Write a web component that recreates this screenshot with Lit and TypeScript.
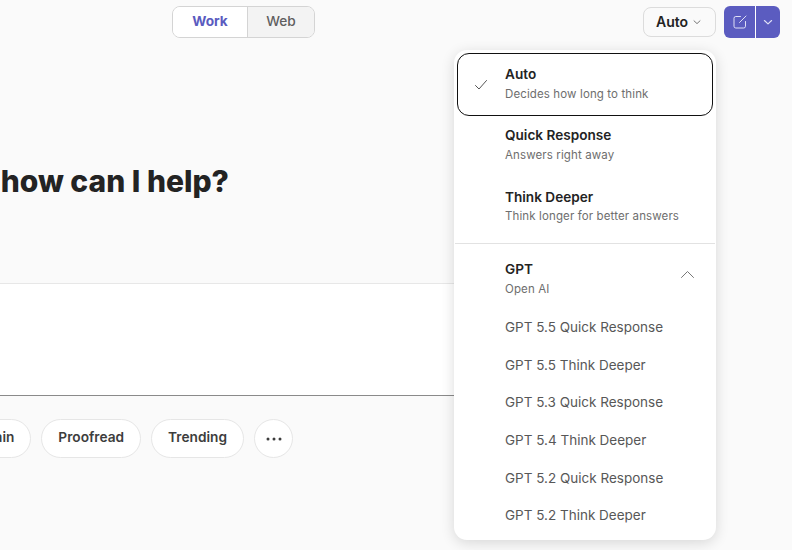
import { LitElement, html, css } from "lit";
import { customElement } from "lit/decorators.js";

const chevronDown = (size: number) => html`<svg width=${size} height=${size} viewBox="0 0 10 10" fill="none" stroke="currentColor" stroke-width="1" stroke-linecap="round" stroke-linejoin="round"><path d="M2 3.8 5 6.6 8 3.8"/></svg>`;

@customElement("app-root")
export class AppRoot extends LitElement {
  static styles = css`
    :host {
      display: block;
      position: relative;
      width: 792px;
      height: 550px;
      overflow: hidden;
      background: #fafafa;
      font-family: Inter, "Liberation Sans", sans-serif;
      color: #232323;
      -webkit-font-smoothing: antialiased;
    }
    .top {
      display: flex;
      align-items: center;
      height: 32px;
      padding: 6px 12px 0 172px;
    }
    .tabs {
      display: flex;
      width: 143px;
      height: 32px;
      box-sizing: border-box;
      border: 1px solid #d4d4d4;
      border-radius: 8px;
      overflow: hidden;
      font-size: 13.7px;
      line-height: 28px;
      text-align: center;
    }
    .tab-on {
      width: 74px;
      background: #fff;
      color: #5a5bbf;
      font-weight: 700;
      border-right: 1px solid #d4d4d4;
    }
    .tab-off { flex: 1; background: #f3f3f3; color: #5f5f5f; font-weight: 500; }
    .auto {
      margin-left: auto;
      display: flex;
      align-items: center;
      justify-content: center;
      gap: 4px;
      width: 73px;
      height: 30px;
      box-sizing: border-box;
      padding: 0 1px 2px 0;
      border: 1px solid #dcdcdc;
      border-radius: 8px;
      font-size: 14px;
      font-weight: 600;
      color: #232323;
    }
    .auto svg { color: #777; margin-top: 2px; }
    .split {
      margin-left: 8px;
      display: flex;
      width: 56px;
      height: 32px;
      border-radius: 6px;
      overflow: hidden;
      background: #5b5cc0;
      color: #dfdff5;
    }
    .split > div { display: flex; align-items: center; justify-content: center; }
    .compose { width: 31px; border-right: 1px solid #fff; }
    .caret { flex: 1; }
    .title {
      display: flex;
      justify-content: flex-end;
      width: 229px;
      margin-top: 123px;
      font-size: 30px;
      line-height: 40px;
      font-weight: 800;
      letter-spacing: 0;
      white-space: nowrap;
      color: #232323;
    }
    .composer {
      width: 470px;
      height: 113px;
      box-sizing: border-box;
      margin-top: 82px;
      background: #fff;
      border-top: 1px solid #e7e7e7;
      border-bottom: 1px solid #8a8a8a;
    }
    .chips {
      display: flex;
      justify-content: flex-end;
      gap: 10px;
      width: 293px;
      margin-top: 23px;
    }
    .chip {
      flex: none;
      height: 39px;
      box-sizing: border-box;
      padding: 0 16px;
      border: 1px solid #e6e6e6;
      border-radius: 20px;
      background: #fff;
      font-size: 13.7px;
      font-weight: 600;
      line-height: 34px;
      color: #3d3d3d;
    }
    .more {
      width: 39px;
      padding: 0;
      display: flex;
      align-items: center;
      justify-content: center;
    }
    .menu {
      position: absolute;
      left: 454px;
      top: 50px;
      width: 262px;
      height: 490px;
      box-sizing: border-box;
      padding: 3px;
      background: #fff;
      border-radius: 13px;
      box-shadow: 0 3px 14px rgba(0, 0, 0, 0.14);
    }
    .opt {
      position: relative;
      height: 61.5px;
      box-sizing: border-box;
      padding: 10px 0 0 48px;
    }
    .opt.sel {
      height: 63px;
      padding: 11px 0 0 47px;
      border: 1.2px solid #111;
      border-radius: 12px;
    }
    .check { position: absolute; left: 16px; top: 25px; color: #555; display: block; }
    .name { font-size: 13.6px; line-height: 18px; font-weight: 600; color: #232323; }
    .sub { margin-top: 2.6px; font-size: 11.5px; line-height: 16px; color: #6e6e6e; letter-spacing: 0.12px; }
    .rule { height: 1px; margin: 4px -2px 0; background: #e2e2e2; }
    .group {
      display: flex;
      justify-content: space-between;
      align-items: center;
      height: 62px;
      box-sizing: border-box;
      padding: 7px 18px 0 48px;
    }
    .group svg { color: #777; margin-bottom: 9px; }
    .models { display: flex; flex-direction: column; padding-top: 3px; }
    .model {
      height: 37.7px;
      padding-left: 48px;
      font-size: 13.5px;
      line-height: 37.7px;
      color: #575757;
    }
  `;

  render() {
    const models = [
      "GPT 5.5 Quick Response",
      "GPT 5.5 Think Deeper",
      "GPT 5.3 Quick Response",
      "GPT 5.4 Think Deeper",
      "GPT 5.2 Quick Response",
      "GPT 5.2 Think Deeper",
    ];
    return html`
      <div class="top">
        <div class="tabs"><div class="tab-on">Work</div><div class="tab-off">Web</div></div>
        <div class="auto">Auto ${chevronDown(10)}</div>
        <div class="split">
          <div class="compose">
            <svg width="16" height="16" viewBox="0 0 16 16" fill="none" stroke="currentColor" stroke-width="1" stroke-linecap="round" stroke-linejoin="round">
              <path d="M8.500 2.500H3.800A1.800 1.800 0 0 0 2 4.300v7.900A1.800 1.800 0 0 0 3.800 14h7.900a1.800 1.800 0 0 0 1.800-1.800V7.500"/>
              <path d="M14 2 7.500 8.500"/>
            </svg>
          </div>
          <div class="caret">${chevronDown(12)}</div>
        </div>
      </div>
      <div class="title">how can I help?</div>
      <div class="composer"></div>
      <div class="chips">
        <div class="chip">Explain</div>
        <div class="chip">Proofread</div>
        <div class="chip">Trending</div>
        <div class="chip more">
          <svg width="16" height="4" viewBox="0 0 16 4" fill="#3d3d3d"><circle cx="2" cy="2" r="1.5"/><circle cx="8" cy="2" r="1.5"/><circle cx="14" cy="2" r="1.5"/></svg>
        </div>
      </div>
      <div class="menu">
        <div class="opt sel">
          <svg class="check" width="14" height="12" viewBox="0 0 14 12" fill="none" stroke="currentColor" stroke-width="1" stroke-linecap="round" stroke-linejoin="round"><path d="M1.500 6.500 5 10 12.500 1.500"/></svg>
          <div class="name">Auto</div>
          <div class="sub">Decides how long to think</div>
        </div>
        <div class="opt"><div class="name">Quick Response</div><div class="sub">Answers right away</div></div>
        <div class="opt"><div class="name">Think Deeper</div><div class="sub">Think longer for better answers</div></div>
        <div class="rule"></div>
        <div class="group">
          <div><div class="name">GPT</div><div class="sub">Open AI</div></div>
          <svg width="15" height="9" viewBox="0 0 15 9" fill="none" stroke="currentColor" stroke-width="1" stroke-linecap="round" stroke-linejoin="round"><path d="M1.500 7.500 7.500 1.500 13.500 7.500"/></svg>
        </div>
        <div class="models">${models.map((m) => html`<div class="model">${m}</div>`)}</div>
      </div>
    `;
  }
}
